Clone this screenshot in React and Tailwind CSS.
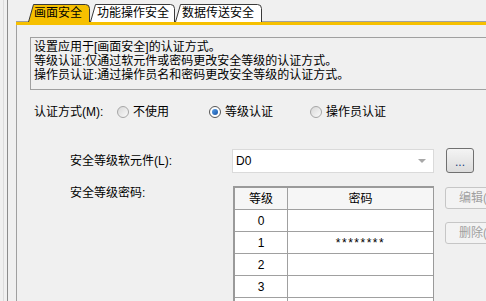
import React from 'react'

const Tab = ({ w, label, active, className }) => {
    return (
        <div className={`relative z-10 -mb-px h-[18px] flex items-center shrink-0 ${className}`}>
            <svg className="absolute inset-0" width={w} height={18}>
                <path
                    d={`M0.5 18 L5.5 0.5 H${w - 4.5} Q${w - 0.5} 0.5 ${w - 0.5} 4.5 V18`}
                    fill={active ? '#f6c000' : '#ffffff'}
                    stroke="#3a3a3a"
                    strokeWidth="1"
                />
            </svg>
            <span className="relative whitespace-nowrap">{label}</span>
        </div>
    )
}

const Radio = ({ checked, label, className }) => {
    return (
        <div className={`flex items-center gap-[4px] shrink-0 ${className}`}>
            {checked ? (
                <div className="w-[12px] h-[12px] rounded-full border border-[#555555] bg-white flex items-center justify-center">
                    <div className="w-[6px] h-[6px] rounded-full bg-gradient-to-br from-[#5aa0e8] to-[#1453a6]"></div>
                </div>
            ) : (
                <div className="w-[12px] h-[12px] rounded-full border border-[#a6a6a6] bg-gradient-to-br from-[#d8d8d8] to-[#fafafa]"></div>
            )}
            <span className="whitespace-nowrap">{label}</span>
        </div>
    )
}

const rows = [
    { level: '0', pw: '' },
    { level: '1', pw: '********' },
    { level: '2', pw: '' },
    { level: '3', pw: '' },
    { level: '4', pw: '' },
]

export default function App() {
    return (
        <div className="w-[486px] h-[301px] overflow-hidden bg-[#f0f0f0] text-black text-[12px] leading-[14px] font-['Liberation_Sans','Noto_Sans_CJK_SC',sans-serif] flex">
            <div className="ml-[3px] w-[1px] shrink-0 bg-[#dcdcdc]"></div>
            <div className="ml-[3px] w-[1px] shrink-0 bg-[#8c8c8c]"></div>
            <div className="ml-[8px] flex-1 flex flex-col min-w-0">
                {/* tabs */}
                <div className="h-[22px] shrink-0 flex items-end pl-[12px] border-b border-[#a0a0a0]">
                    <Tab w={62} label="画面安全" active className="w-[62px] pl-[6px]" />
                    <Tab w={85} label="功能操作安全" className="w-[85px] pl-[7px]" />
                    <Tab w={87} label="数据传送安全" className="w-[87px] pl-[7px]" />
                </div>
                <div className="h-[3px] shrink-0 bg-[#f6c000]"></div>

                <div className="flex-1 border-l border-[#a0a0a0] pl-[13px]">
                    <div className="mt-[12px] w-[470px] h-[53px] border border-[#a0a0a0] pl-[3px] pt-[2px] whitespace-nowrap">
                        <div>设置应用于[画面安全]的认证方式。</div>
                        <div>等级认证:仅通过软元件或密码更改安全等级的认证方式。</div>
                        <div>操作员认证:通过操作员名和密码更改安全等级的认证方式。</div>
                    </div>

                    <div className="mt-[12px] h-[20px] flex items-center pl-[4px]">
                        <span className="w-[83px] shrink-0 whitespace-nowrap">认证方式(M):</span>
                        <Radio label="不使用" className="w-[92px]" />
                        <Radio checked label="等级认证" className="w-[101px]" />
                        <Radio label="操作员认证" />
                    </div>

                    <div className="mt-[26px] h-[25px] flex items-center pl-[40px]">
                        <span className="w-[162px] shrink-0 whitespace-nowrap">安全等级软元件(L):</span>
                        <div className="w-[202px] h-[24px] shrink-0 bg-white border border-[#dadada] flex items-center pl-[3px]">
                            <span>D0</span>
                            <div className="ml-auto mr-[7px] w-0 h-0 border-l-[4px] border-r-[4px] border-t-[4px] border-l-transparent border-r-transparent border-t-[#a8a8a8]"></div>
                        </div>
                        <div className="ml-[12px] w-[28px] h-[25px] shrink-0 rounded-[3px] border border-[#707070] bg-gradient-to-b from-[#f4f4f4] to-[#dcdcdc] flex items-end justify-center pb-[5px] text-[#1b3f7c] leading-[10px]">
                            ...
                        </div>
                    </div>

                    <div className="mt-[13px] flex pl-[40px]">
                        <span className="w-[163px] shrink-0 whitespace-nowrap">安全等级密码:</span>
                        <div className="w-[201px] shrink-0 border-l-2 border-t-2 border-r border-[#9a9a9a] bg-white">
                            <div className="h-[22px] flex border-b border-[#a0a0a0] bg-[#f6f6f6]">
                                <div className="w-[53px] border-r border-[#a0a0a0] flex items-center justify-center">等级</div>
                                <div className="flex-1 flex items-center justify-center">密码</div>
                            </div>
                            {rows.map((r) => (
                                <div key={r.level} className="h-[22px] flex border-b border-[#a0a0a0]">
                                    <div className="w-[53px] border-r border-[#a0a0a0] flex items-center justify-center">{r.level}</div>
                                    <div className="flex-1 flex items-center justify-center tracking-[1.5px]">{r.pw}</div>
                                </div>
                            ))}
                        </div>
                        <div className="ml-[11px] shrink-0 flex flex-col gap-[13px] pt-[1px]">
                            <div className="w-[70px] h-[22px] rounded-[3px] border border-[#c6c6c6] bg-[#f3f3f3] text-[#a0a0a0] flex items-center pl-[13px] whitespace-nowrap">编辑(E)...</div>
                            <div className="w-[70px] h-[22px] rounded-[3px] border border-[#c6c6c6] bg-[#f3f3f3] text-[#a0a0a0] flex items-center pl-[13px] whitespace-nowrap">删除(D)</div>
                        </div>
                    </div>
                </div>
            </div>
        </div>
    )
}
